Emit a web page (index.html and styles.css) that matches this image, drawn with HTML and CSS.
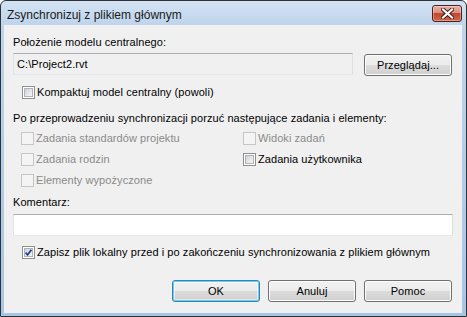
FILE: index.html
```html
<!DOCTYPE html>
<html lang="pl">
<head>
    <meta charset="UTF-8">
    <title>Zsynchronizuj z plikiem głównym</title>
    <link rel="stylesheet" href="styles.css">
</head>
<body>
    <div class="window">
        <div class="titlebar">
            <span class="title">Zsynchronizuj z plikiem głównym</span>
            <div class="close">
                <svg width="13" height="11" viewBox="0 0 13 11">
                    <path d="M2 1.5 L11 9.5 M11 1.5 L2 9.5" stroke="#3b1a14" stroke-width="4" stroke-linecap="square"/>
                    <path d="M2 1.5 L11 9.5 M11 1.5 L2 9.5" stroke="#ffffff" stroke-width="2.2" stroke-linecap="square"/>
                </svg>
            </div>
        </div>

        <div class="client">
            <div class="label first">Położenie modelu centralnego:</div>
            <div class="path-row">
                <div class="field readonly">C:\Project2.rvt</div>
                <div class="btn browse">Przeglądaj...</div>
            </div>

            <div class="check compact">
                <span class="box"><span class="inner"></span></span>
                <span>Kompaktuj model centralny (powoli)</span>
            </div>

            <div class="label after">Po przeprowadzeniu synchronizacji porzuć następujące zadania i elementy:</div>
            <div class="options">
                <div class="check disabled">
                    <span class="box"><span class="inner"></span></span>
                    <span>Zadania standardów projektu</span>
                </div>
                <div class="check disabled">
                    <span class="box"><span class="inner"></span></span>
                    <span>Widoki zadań</span>
                </div>
                <div class="check disabled">
                    <span class="box"><span class="inner"></span></span>
                    <span>Zadania rodzin</span>
                </div>
                <div class="check">
                    <span class="box"><span class="inner"></span></span>
                    <span>Zadania użytkownika</span>
                </div>
                <div class="check disabled">
                    <span class="box"><span class="inner"></span></span>
                    <span>Elementy wypożyczone</span>
                </div>
            </div>

            <div class="label comment-label">Komentarz:</div>
            <div class="field comment"></div>

            <div class="check save">
                <span class="box"><span class="inner">
                    <svg width="7" height="7" viewBox="0 0 7 7">
                        <path d="M0.6 3.6 L2.6 5.8 L6.4 0.8" stroke="#1f3f94" stroke-width="1.7" fill="none"/>
                    </svg>
                </span></span>
                <span>Zapisz plik lokalny przed i po zakończeniu synchronizowania z plikiem głównym</span>
            </div>

            <div class="buttons">
                <div class="btn default">OK</div>
                <div class="btn">Anuluj</div>
                <div class="btn">Pomoc</div>
            </div>
        </div>
    </div>
</body>
</html>
```

FILE: styles.css
```css
* {
    margin: 0;
    padding: 0;
    box-sizing: border-box;
}

body {
    font-family: 'Liberation Sans', Arial, sans-serif;
    font-size: 11px;
    letter-spacing: 0.07px;
    color: #000;
    background: #fff;
}

.window {
    width: 467px;
    height: 317px;
    border: 1px solid #2f3338;
    border-radius: 6px 6px 0 0;
    background: linear-gradient(to bottom, #d4e3f3 0, #bed4ec 24px, #a7c6e6 100%);
    padding: 0 4px 3px 3px;
    display: flex;
    flex-direction: column;
}

.titlebar {
    height: 24px;
    display: flex;
    justify-content: space-between;
    align-items: flex-start;
    padding: 4px 0 0 3px;
}

.title {
    font-size: 12px;
    line-height: 16px;
    letter-spacing: 0;
    margin-top: 2px;
    color: #1b1b1b;
}

.close {
    width: 30px;
    height: 17px;
    border: 1px solid #4a231d;
    border-radius: 3px;
    background: linear-gradient(to bottom, #e9b1a5 0%, #d98f7f 45%, #c4462e 50%, #d0644a 100%);
    box-shadow: inset 0 0 0 1px rgba(255, 255, 255, 0.35);
    display: flex;
    align-items: center;
    justify-content: center;
}

.client {
    flex: 1;
    background: #f0f0f0;
    padding: 0 10px 0 9px;
}

.label {
    line-height: 13px;
}

.label.first {
    margin-top: 11px;
}

.path-row {
    display: flex;
    margin-top: 4px;
}

.field {
    height: 22px;
    border: 1px solid;
    border-color: #abadb3 #dbdfe6 #e3e9ef #e2e3ea;
    padding-left: 3px;
    line-height: 20px;
    background: #fff;
}

.field.readonly {
    width: 340px;
    background: #f0f0f0;
}

.field.comment {
    width: 440px;
    margin-top: 5px;
}

.btn {
    width: 88px;
    height: 22px;
    border: 1px solid #707070;
    border-radius: 3px;
    background: linear-gradient(to bottom, #f2f2f2 0%, #ebebeb 50%, #dddddd 50%, #cfcfcf 100%);
    box-shadow: inset 0 0 0 1px #fcfcfc;
    text-align: center;
    line-height: 20px;
}

.btn.browse {
    margin-left: 11px;
    margin-top: 1px;
}

.btn.default {
    border-color: #3c7fb1;
    box-shadow: inset 0 0 0 1px #5fd3f8, inset 0 0 0 2px rgba(255, 255, 255, 0.5);
}

.check {
    display: flex;
    align-items: center;
    height: 13px;
    line-height: 13px;
}

.check .box {
    width: 13px;
    height: 13px;
    border: 1px solid #8e8f8f;
    background: #fff;
    padding: 1px;
    margin-right: 2px;
    flex-shrink: 0;
}

.check .inner {
    display: block;
    width: 9px;
    height: 9px;
    border: 1px solid #b0b4b8;
    background: linear-gradient(135deg, #cdd1d6 0%, #e8e9eb 60%, #f7f7f7 100%);
}

.check .inner svg {
    display: block;
}

.check.disabled {
    color: #8a8a8a;
}

.check.disabled .box {
    border-color: #c6c6c6;
    background: #f4f4f4;
}

.check.disabled .inner {
    border-color: #f4f4f4;
    background: #f4f4f4;
}

.check.compact {
    margin-top: 10px;
    margin-left: 9px;
}

.label.after {
    margin-top: 13px;
}

.options {
    display: grid;
    grid-template-columns: 222px auto;
    row-gap: 8px;
    margin-top: 7px;
    margin-left: 8px;
}

.label.comment-label {
    margin-top: 9px;
}

.check.save {
    margin-top: 10px;
    margin-left: 9px;
}

.buttons {
    display: flex;
    justify-content: flex-end;
    gap: 8px;
    margin-top: 21px;
}
```
